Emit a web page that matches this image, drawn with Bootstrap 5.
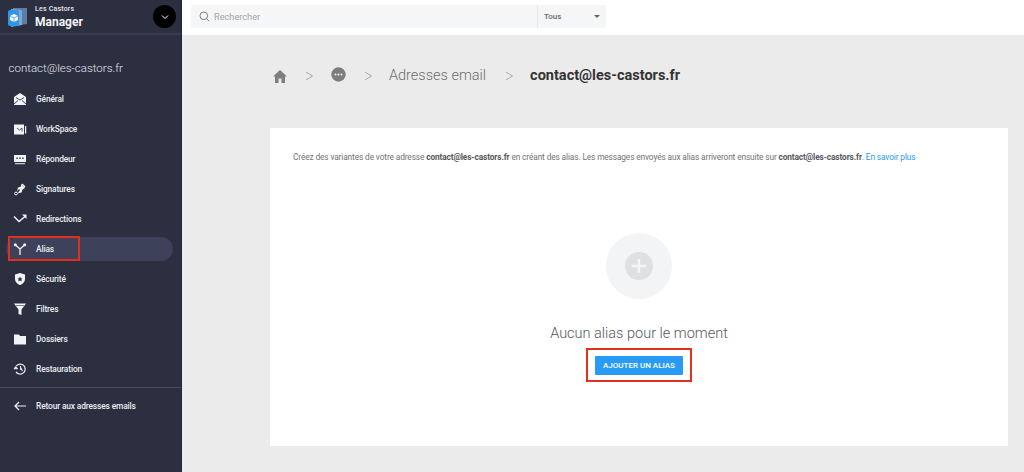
<!DOCTYPE html>
<html lang="fr">
<head>
<meta charset="utf-8">
<title>Les Castors Manager</title>
<link href="https://cdn.jsdelivr.net/npm/bootstrap@5.3.0/dist/css/bootstrap.min.css" rel="stylesheet">
<style>
html,body{height:472px;overflow:hidden}
body{font-family:Roboto,"Liberation Sans",sans-serif;background:#ebebeb;color:#333}
.shell{height:472px}
.side{width:182px;flex:none;background:#2b2f40;color:#fff;height:472px;border-right:1px solid #23263a}
.brand{height:35px;border-bottom:2px solid #383c50;padding:0 5px 0 7px}
.brand-small{font-size:7px;font-weight:500;line-height:8px;color:#e8e9ee;letter-spacing:.2px}
.brand-big{font-size:12px;font-weight:700;line-height:14px;margin-top:2px;color:#f3f3f6}
.brand-toggle{width:23px;height:23px;background:#000;border-radius:50%}
.acct{font-size:11.5px;font-weight:300;color:#e4e5ea;padding:25px 0 0 8.5px;line-height:16px;height:52px}
.side-link{height:24px;margin:0 8px 6px 6px;padding-left:7px;border-radius:12px;font-size:8.4px;letter-spacing:-.14px;font-weight:500;color:#eceef2;text-decoration:none;gap:9px}
.side-link.on{background:#3d4159}
.side-link svg{width:14px;height:14px;flex:none;fill:#f2f3f5}
.side-rule{border-top:1px solid #4b4e5e;margin:0}
.back{margin-top:6px}
.mark-box{position:absolute;border:2px solid #e0301e;pointer-events:none}
.mark-alias{left:8px;top:-1px;width:72px;height:25px}
.topbar{height:35px;background:#fff;padding:5px 0 0 9px}
.searchbox{width:415px;height:23px;background:#f5f6f7;border-radius:2px}
.search-field{width:347px;padding-left:8px;gap:4px;font-size:9.2px;color:#a2a5aa;border-right:1px solid #e7e8ea}
.search-sel{flex:1;padding:0 6px;font-size:8px;font-weight:500;color:#666a70}
.caret-dn{width:0;height:0;border:3px solid transparent;border-top:3px solid #666;border-bottom:0}
.content{padding:32px 16px 0 88px}
.crumbs{height:18px;gap:0;font-size:14px;margin-bottom:43px;margin-left:2px}
.crumb-mid{font-weight:300;color:#6d6d6d;font-size:14.5px;margin-left:16px}
.crumb-cur{font-weight:700;color:#333;font-size:14.5px;margin-left:16px}
.sep-a{margin-left:17px}
.sep-b{margin-left:18px}
.sep-c{margin-left:19px}
.dots-ic{margin-left:17px;margin-top:-4px}
.panel{height:318px;background:#fff;width:738px;padding:24px 23px 0;position:relative}
.intro{font-size:8.3px;letter-spacing:-.115px;color:#6f7276;line-height:11px;white-space:nowrap;margin:0}
.intro strong{font-weight:700;color:#55585c}
.intro a{color:#2a9bf0;text-decoration:none}
.empty-disc{width:66px;height:66px;border-radius:50%;background:#f3f4f5;margin-top:70px}
.empty-disc svg{width:28px;height:28px}
.empty-title{font-size:14.5px;font-weight:300;color:#55585c;line-height:18px;margin:26px 0 0}
.add-wrap{margin-top:5px;border:2px solid #e0301e;padding:7px;width:106px;height:34px;box-sizing:border-box}
.add-btn{width:88px;height:19px;background:#2a9bf5;color:#fff;font-size:8px;font-weight:500;padding:0;border:0;border-radius:1px;line-height:19px;white-space:nowrap}
</style>
</head>
<body>
<div class="d-flex shell">
  <aside class="side">
    <div class="brand d-flex align-items-center">
      <svg width="22" height="24" viewBox="0 0 22 24" class="me-2 flex-none"><path d="M6 3l14-0v16l-14 2z" fill="#5c7ea6"/><path d="M4 4l11 1v15l-11 2z" fill="#7fa7d3"/><rect x="1" y="6" width="11" height="16" rx="2" transform="translate(0 -1)" fill="#3096e8"/><path d="M7 9l4 2v4l-4 2-4-2v-4z" fill="#fff"/><path d="M7 13v4M3 11l4 2 4-2" stroke="#3096e8" stroke-width=".8" fill="none"/></svg>
      <div class="flex-grow-1" style="margin-left:-2px">
        <div class="brand-small">Les Castors</div>
        <div class="brand-big">Manager</div>
      </div>
      <div class="brand-toggle d-flex align-items-center justify-content-center"><svg width="8" height="6" viewBox="0 0 8 6"><path d="M1 1.500l3 3 3-3" stroke="#fff" stroke-width="1" fill="none"/></svg></div>
    </div>
    <div class="acct">contact@les-castors.fr</div>
    <nav class="d-flex flex-column">
      <a class="side-link d-flex align-items-center" href="#"><svg viewBox="0 0 14 14"><path d="M7 1l6 4v8H1V5z"/><path d="M3 5.500l4 2.600 4-2.600M1 12l4-3.500M13 12l-4-3.500" stroke="#2b2f40" stroke-width=".9" fill="none"/></svg>Général</a>
      <a class="side-link d-flex align-items-center" href="#"><svg viewBox="0 0 14 14"><path d="M1 2.500h10v10H1z"/><path d="M12 4h1.200v7.500H12z"/><path d="M4 6l2.500 2L9 6v3.500" stroke="#2b2f40" stroke-width=".8" fill="none"/></svg>WorkSpace</a>
      <a class="side-link d-flex align-items-center" href="#"><svg viewBox="0 0 14 14"><path d="M1 3h12v7H1z"/><path d="M2 11.200h10v1H2z"/><path d="M3.400 5.500h1.400v1.400H3.400zM6.300 5.500h1.400v1.400H6.300zM9.200 5.500h1.400v1.400H9.200z" fill="#2b2f40"/></svg>Répondeur</a>
      <a class="side-link d-flex align-items-center" href="#"><svg viewBox="0 0 14 14"><path d="M8 2l4 4-2.500 1.500-1 3-4 1L7 8 6 7l-2 2.500 1-4 3-1z"/><path d="M9.500 1.500l3 3-1 1-3-3z"/><circle cx="3" cy="11.500" r="1.400" fill="none" stroke="#f2f3f5"/></svg>Signatures</a>
      <a class="side-link d-flex align-items-center" href="#"><svg viewBox="0 0 14 14"><path d="M1 4.500l5 5 6-5" stroke="#f2f3f5" stroke-width="1.500" fill="none"/><path d="M9 2.500h4.500V7z"/></svg>Redirections</a>
      <div class="position-relative">
        <a class="side-link on d-flex align-items-center" href="#"><svg viewBox="0 0 14 14"><path d="M7 13V7M7 7L2.500 3M7 7l4.500-4" stroke="#f2f3f5" stroke-width="1.300" fill="none"/><circle cx="2.300" cy="2.800" r="1.500"/><circle cx="11.700" cy="2.800" r="1.500"/></svg>Alias</a>
        <span class="mark-box mark-alias"></span>
      </div>
      <a class="side-link d-flex align-items-center" href="#"><svg viewBox="0 0 14 14"><path d="M7 1l5 1.500V7c0 3-2.500 5.200-5 6-2.500-.8-5-3-5-6V2.500z"/><path d="M7 4.500l.8 1.700 1.800.2-1.300 1.200.4 1.800L7 8.500l-1.700.9.400-1.800L4.400 6.400l1.800-.2z" fill="#2b2f40"/></svg>Sécurité</a>
      <a class="side-link d-flex align-items-center" href="#"><svg viewBox="0 0 14 14"><path d="M1 1.500h12L8.500 7.500V13l-3-1V7.500z"/><path d="M3 3.500h8" stroke="#2b2f40" stroke-width=".6"/></svg>Filtres</a>
      <a class="side-link d-flex align-items-center" href="#"><svg viewBox="0 0 14 14"><path d="M1 2.500h4.800l1.400 1.500H13v8.500H1z"/></svg>Dossiers</a>
      <a class="side-link d-flex align-items-center" href="#"><svg viewBox="0 0 14 14"><path d="M3.200 4A5 5 0 1 1 3 9.800" stroke="#f2f3f5" stroke-width="1.200" fill="none"/><path d="M1 6.800h3.600L2.800 4.500zM7.500 4v3.400l2.300 1.300" stroke="#f2f3f5" stroke-width=".9"/></svg>Restauration</a>
    </nav>
    <div class="side-rule"></div>
    <a class="side-link back d-flex align-items-center" href="#"><svg viewBox="0 0 14 14"><path d="M13 7H2M6 3L2 7l4 4" stroke="#f2f3f5" stroke-width="1.200" fill="none"/></svg>Retour aux adresses emails</a>
  </aside>
  <main class="flex-grow-1">
    <div class="topbar">
      <div class="searchbox d-flex">
        <div class="search-field d-flex align-items-center"><svg width="11" height="11" viewBox="0 0 11 11"><circle cx="4.800" cy="4.800" r="3.800" fill="none" stroke="#7a7d82" stroke-width="1"/><path d="M7.700 7.700l2.500 2.500" stroke="#7a7d82" stroke-width="1"/></svg>Rechercher</div>
        <div class="search-sel d-flex align-items-center justify-content-between"><span>Tous</span><span class="caret-dn"></span></div>
      </div>
    </div>
    <div class="content">
      <div class="crumbs d-flex align-items-center">
        <svg width="16" height="14" viewBox="0 0 16 14"><path d="M8 1L1 7.500h2V14h3.500V9.500h3V14H13V7.500h2z" fill="#7d7d7d"/></svg>
        <svg class="sep-a" width="9" height="10" viewBox="0 0 9 10"><path d="M1 1l6.500 4L1 9" fill="none" stroke="#a9a9a9" stroke-width="1"/></svg>
        <svg class="dots-ic" width="15" height="15" viewBox="0 0 15 15"><circle cx="7.500" cy="7.500" r="7.200" fill="#7d7d7d"/><circle cx="4.500" cy="7.500" r="1" fill="#eee"/><circle cx="7.500" cy="7.500" r="1" fill="#eee"/><circle cx="10.500" cy="7.500" r="1" fill="#eee"/></svg>
        <svg class="sep-b" width="9" height="10" viewBox="0 0 9 10"><path d="M1 1l6.500 4L1 9" fill="none" stroke="#a9a9a9" stroke-width="1"/></svg>
        <span class="crumb-mid">Adresses email</span>
        <svg class="sep-c" width="9" height="10" viewBox="0 0 9 10"><path d="M1 1l6.500 4L1 9" fill="none" stroke="#a9a9a9" stroke-width="1"/></svg>
        <span class="crumb-cur">contact@les-castors.fr</span>
      </div>
      <section class="panel d-flex flex-column align-items-center">
        <p class="intro align-self-start">Créez des variantes de votre adresse <strong>contact@les-castors.fr</strong> en créant des alias. Les messages envoyés aux alias arriveront ensuite sur <strong>contact@les-castors.fr</strong>. <a href="#">En savoir plus</a></p>
        <div class="empty-disc d-flex align-items-center justify-content-center"><svg viewBox="0 0 28 28"><circle cx="14" cy="14" r="14" fill="#dfe0e1"/><path d="M14 7v14M7 14h14" stroke="#f5f5f6" stroke-width="2.400"/></svg></div>
        <h2 class="empty-title">Aucun alias pour le moment</h2>
        <div class="add-wrap d-flex align-items-center justify-content-center"><button class="btn add-btn" type="button">AJOUTER UN ALIAS</button></div>
      </section>
    </div>
  </main>
</div>
<script src="https://cdn.jsdelivr.net/npm/bootstrap@5.3.0/dist/js/bootstrap.bundle.min.js"></script>
</body>
</html>
